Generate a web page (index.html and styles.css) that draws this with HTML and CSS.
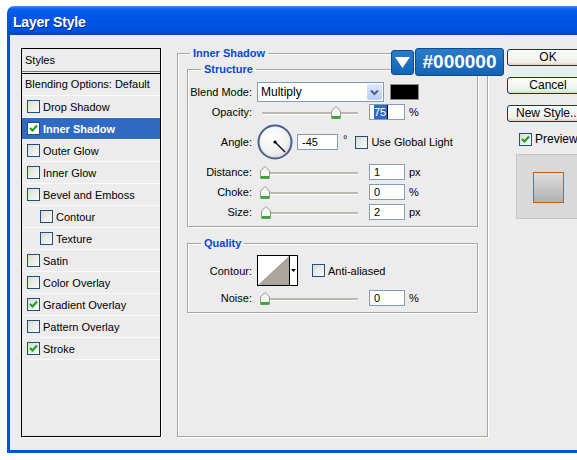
FILE: index.html
```html
<!DOCTYPE html>
<html lang="en">
<head>
  <meta charset="UTF-8">
  <title>Layer Style</title>
  <link rel="stylesheet" href="styles.css">
</head>
<body>
  <div class="window">
    <!-- TITLE BAR -->
    <div class="titlebar">Layer Style</div>

    <div class="client">
      <!-- STYLES LIST -->
      <div class="styles-list">
        <div class="list-head">Styles</div>
        <div class="list-blend">Blending Options: Default</div>
        <div class="list-item"><span class="check"></span>Drop Shadow</div>
        <div class="list-item selected"><span class="check"><svg width="11" height="11" viewBox="0 0 11 11"><path d="M2 5 L4.5 7.5 L9 2.5" fill="none" stroke="#21a121" stroke-width="2.2"/></svg></span>Inner Shadow</div>
        <div class="list-item"><span class="check"></span>Outer Glow</div>
        <div class="list-item"><span class="check"></span>Inner Glow</div>
        <div class="list-item"><span class="check"></span>Bevel and Emboss</div>
        <div class="list-item sub"><span class="check"></span>Contour</div>
        <div class="list-item sub"><span class="check"></span>Texture</div>
        <div class="list-item"><span class="check"></span>Satin</div>
        <div class="list-item"><span class="check"></span>Color Overlay</div>
        <div class="list-item"><span class="check"><svg width="11" height="11" viewBox="0 0 11 11"><path d="M2 5 L4.5 7.5 L9 2.5" fill="none" stroke="#21a121" stroke-width="2.2"/></svg></span>Gradient Overlay</div>
        <div class="list-item"><span class="check"></span>Pattern Overlay</div>
        <div class="list-item"><span class="check"><svg width="11" height="11" viewBox="0 0 11 11"><path d="M2 5 L4.5 7.5 L9 2.5" fill="none" stroke="#21a121" stroke-width="2.2"/></svg></span>Stroke</div>
      </div>

      <!-- INNER SHADOW SETTINGS -->
      <fieldset class="group outer">
        <legend>Inner Shadow</legend>

        <fieldset class="group structure">
          <legend>Structure</legend>
          <div class="row blend-row">
            <span class="lbl">Blend Mode:</span>
            <div class="select">
              <span class="select-value">Multiply</span>
              <span class="select-btn"><svg width="9" height="7" viewBox="0 0 9 7"><path d="M1 1.5 L4.5 5 L8 1.5" fill="none" stroke="#4d6185" stroke-width="2"/></svg></span>
            </div>
            <span class="color-swatch"></span>
          </div>
          <div class="row opacity-row">
            <span class="lbl">Opacity:</span>
            <div class="slider"><span class="thumb" style="left: 74px"><svg width="10" height="13" viewBox="0 0 10 13"><path d="M0.5 5 L5 0.5 L9.5 5 V12.5 H0.5 Z" fill="#f6f6f2" stroke="#8e9a8e"/><rect x="1" y="10" width="8" height="2.5" fill="#33a833"/></svg></span></div>
            <span class="field"><span class="selected-text">75</span></span>
            <span class="unit">%</span>
          </div>
          <div class="row angle-row">
            <span class="lbl">Angle:</span>
            <svg class="dial" width="36" height="36" viewBox="0 0 36 36">
              <defs>
                <radialGradient id="dialFill" cx="0.4" cy="0.35" r="0.7">
                  <stop offset="0" stop-color="#ffffff"/>
                  <stop offset="0.7" stop-color="#f0f0ee"/>
                  <stop offset="1" stop-color="#d2d2d0"/>
                </radialGradient>
              </defs>
              <circle cx="18" cy="18" r="16.5" fill="url(#dialFill)" stroke="#4b5f8e" stroke-width="2"/>
              <line x1="18" y1="18" x2="28" y2="28" stroke="#000" stroke-width="1.2"/>
              <circle cx="18" cy="18" r="1.6" fill="#000"/>
            </svg>
            <span class="field angle-field">-45</span>
            <span class="unit degree">°</span>
            <span class="check global-check"></span>
            <span class="check-label">Use Global Light</span>
          </div>
          <div class="row">
            <span class="lbl">Distance:</span>
            <div class="slider"><span class="thumb" style="left: 3px"><svg width="10" height="13" viewBox="0 0 10 13"><path d="M0.5 5 L5 0.5 L9.5 5 V12.5 H0.5 Z" fill="#f6f6f2" stroke="#8e9a8e"/><rect x="1" y="10" width="8" height="2.5" fill="#33a833"/></svg></span></div>
            <span class="field">1</span>
            <span class="unit">px</span>
          </div>
          <div class="row">
            <span class="lbl">Choke:</span>
            <div class="slider"><span class="thumb" style="left: 3px"><svg width="10" height="13" viewBox="0 0 10 13"><path d="M0.5 5 L5 0.5 L9.5 5 V12.5 H0.5 Z" fill="#f6f6f2" stroke="#8e9a8e"/><rect x="1" y="10" width="8" height="2.5" fill="#33a833"/></svg></span></div>
            <span class="field">0</span>
            <span class="unit">%</span>
          </div>
          <div class="row">
            <span class="lbl">Size:</span>
            <div class="slider"><span class="thumb" style="left: 4px"><svg width="10" height="13" viewBox="0 0 10 13"><path d="M0.5 5 L5 0.5 L9.5 5 V12.5 H0.5 Z" fill="#f6f6f2" stroke="#8e9a8e"/><rect x="1" y="10" width="8" height="2.5" fill="#33a833"/></svg></span></div>
            <span class="field">2</span>
            <span class="unit">px</span>
          </div>
        </fieldset>

        <fieldset class="group quality">
          <legend>Quality</legend>
          <div class="row contour-row">
            <span class="lbl">Contour:</span>
            <div class="contour-picker">
              <svg class="contour-curve" width="31" height="29" viewBox="0 0 31 29"><rect width="31" height="29" fill="#fff"/><path d="M0 29 L31 0 V29 Z" fill="#aaa69b"/></svg>
              <span class="contour-btn"><svg width="5" height="3" viewBox="0 0 5 3"><path d="M0 0 H5 L2.5 3 Z" fill="#000"/></svg></span>
            </div>
            <span class="check aa-check"></span>
            <span class="check-label">Anti-aliased</span>
          </div>
          <div class="row">
            <span class="lbl">Noise:</span>
            <div class="slider"><span class="thumb" style="left: 3px"><svg width="10" height="13" viewBox="0 0 10 13"><path d="M0.5 5 L5 0.5 L9.5 5 V12.5 H0.5 Z" fill="#f6f6f2" stroke="#8e9a8e"/><rect x="1" y="10" width="8" height="2.5" fill="#33a833"/></svg></span></div>
            <span class="field">0</span>
            <span class="unit">%</span>
          </div>
        </fieldset>
      </fieldset>

      <!-- BUTTONS + PREVIEW -->
      <div class="actions">
        <button class="btn">OK</button>
        <button class="btn">Cancel</button>
        <button class="btn">New Style...</button>
        <div class="preview-toggle">
          <span class="check"><svg width="11" height="11" viewBox="0 0 11 11"><path d="M2 5 L4.5 7.5 L9 2.5" fill="none" stroke="#21a121" stroke-width="2.2"/></svg></span>
          <span class="preview-label">Preview</span>
        </div>
        <div class="preview-box">
          <span class="preview-swatch"></span>
        </div>
      </div>
    </div>

    <!-- COLOUR CALLOUT -->
    <div class="swatch-badge">
      <span class="badge-drop"><svg width="15" height="11" viewBox="0 0 15 11"><path d="M0 0 H15 L7.5 11 Z" fill="#fff"/></svg></span>
      <span class="badge-value">#000000</span>
    </div>
  </div>
</body>
</html>
```

FILE: styles.css
```css
body {
  margin: 0;
  background: #fff;
  overflow: hidden;
  font-family: "Liberation Sans", Arial, sans-serif;
  font-size: 11px;
  color: #000;
}

/* WINDOW FRAME */
.window {
  position: relative;
  width: 640px;
  margin: 6px 0 0 7px;
}

.titlebar {
  height: 29px;
  box-sizing: border-box;
  padding: 8px 0 0 6px;
  border-radius: 7px 7px 0 0;
  background: linear-gradient(to bottom, #3d8ef8 0, #0a60e8 3px, #0056e6 40%, #0052df 85%, #0044c4 100%);
  color: #fff;
  font-size: 14px;
  font-weight: bold;
  letter-spacing: -0.2px;
  text-shadow: 1px 1px 0 #0a2a8a;
}

.client {
  display: flex;
  align-items: flex-start;
  height: 418px;
  box-sizing: border-box;
  padding: 13px 0 0 11px;
  background: #ececec;
  border-left: 3px solid #0a4fd8;
  border-bottom: 3px solid #0a4fd8;
}

/* STYLES LIST */
.styles-list {
  width: 140px;
  height: 389px;
  box-sizing: border-box;
  border: 1px solid #000;
  box-shadow: 1px 1px 0 #fff;
}

.list-head {
  height: 22px;
  line-height: 22px;
  padding-left: 3px;
  border-bottom: 1px solid #7a7a7a;
  margin-bottom: 1px;
}

.list-blend {
  height: 21px;
  line-height: 21px;
  padding-left: 3px;
  border-top: 1px solid #000;
  border-bottom: 1px solid #fafafa;
}

.list-item {
  display: flex;
  align-items: center;
  height: 21px;
  padding-left: 5px;
  border-bottom: 1px solid #fafafa;
}

.list-item.sub {
  padding-left: 18px;
}

.list-item.selected {
  background: #316ac5;
  color: #fff;
  font-weight: bold;
}

.check {
  display: inline-flex;
  align-items: center;
  justify-content: center;
  width: 13px;
  height: 13px;
  box-sizing: border-box;
  margin-right: 3px;
  border: 1px solid #1c5180;
  background: linear-gradient(135deg, #dcdcd4, #fbfbf9);
}

.list-item.selected .check {
  background: #fff;
}

/* GROUP BOXES */
.group {
  margin: 0;
  padding: 0 9px;
  box-sizing: border-box;
  border: 1px solid #a5a59c;
  box-shadow: inset 1px 1px 0 #fff, 1px 1px 0 #fff;
}

.group legend {
  padding: 0 3px;
  line-height: 13px;
  color: #0a46d2;
  font-weight: bold;
}

.outer {
  width: 311px;
  height: 390px;
  margin: -1px 0 0 16px;
}

.outer > legend {
  margin-left: 3px;
}

.structure,
.quality {
  padding: 0;
}

.structure legend,
.quality legend {
  margin-left: 13px;
}

.structure {
  margin-top: 3px;
  padding-top: 6px;
  padding-bottom: 6px;
}

.quality {
  margin-top: 10px;
  padding-top: 5px;
  padding-bottom: 6px;
}

/* FORM ROWS */
.row {
  display: flex;
  align-items: center;
  height: 16px;
  margin-top: 4px;
}

.blend-row {
  height: 20px;
  margin-top: 0;
}

.opacity-row {
  margin-top: 2px;
}

.angle-row {
  height: 36px;
}

.contour-row {
  height: 31px;
  margin-top: 0;
}

.lbl {
  width: 64px;
  margin-right: 5px;
  text-align: right;
}

.select {
  display: flex;
  width: 127px;
  height: 20px;
  box-sizing: border-box;
  border: 1px solid #7f9db9;
  background: #fff;
}

.select-value {
  flex: 1;
  padding-left: 3px;
  line-height: 18px;
  font-size: 12px;
}

.select-btn {
  display: flex;
  align-items: center;
  justify-content: center;
  width: 15px;
  margin: 1px;
  border-radius: 2px;
  background: linear-gradient(to bottom, #dde8fd, #b9cdf9);
}

.color-swatch {
  width: 29px;
  height: 16px;
  box-sizing: border-box;
  margin-left: 6px;
  border: 1px solid #8d8d8d;
  background: #000;
}

.slider {
  position: relative;
  width: 107px;
  height: 16px;
}

.slider::before {
  content: "";
  position: absolute;
  left: 5px;
  right: 6px;
  top: 8px;
  height: 2px;
  border-radius: 1px;
  background: #b8b8b0;
  border-bottom: 1px solid #fff;
}

.thumb {
  position: absolute;
  top: 2px;
  line-height: 0;
}

.field {
  width: 36px;
  height: 16px;
  box-sizing: border-box;
  margin-left: 5px;
  padding-left: 4px;
  border: 1px solid #7f9db9;
  background: #fff;
  line-height: 14px;
}

.selected-text {
  display: inline-block;
  background: #316ac5;
  color: #fff;
  border-right: 1px solid #000;
  padding-right: 1px;
}

.unit {
  margin-left: 4px;
}

.angle-field {
  width: 41px;
  margin-left: 4px;
}

.degree {
  margin-left: 5px;
  align-self: flex-start;
  margin-top: 9px;
}

.global-check {
  margin-left: 8px;
}

.contour-picker {
  display: flex;
  width: 41px;
  height: 31px;
  box-sizing: border-box;
  border: 1px solid #000;
  background: #fff;
}

.contour-btn {
  display: flex;
  align-items: center;
  justify-content: center;
  flex: 1;
  border-left: 1px solid #000;
}

.aa-check {
  margin-left: 14px;
}

/* ACTIONS */
.actions {
  display: flex;
  flex-direction: column;
  align-items: flex-start;
  gap: 11px;
  margin: 1px 0 0 19px;
}

.btn {
  width: 82px;
  height: 17px;
  padding: 0;
  border: 1px solid #003c74;
  border-radius: 3px;
  background: linear-gradient(to bottom, #ffffff, #f0f0ea 80%, #d8d4cb);
  font-family: inherit;
  font-size: 12px;
  line-height: 15px;
  color: #000;
}

.preview-toggle {
  display: flex;
  align-items: center;
  margin: -1px 0 0 12px;
}

.preview-label {
  font-size: 12px;
}

.preview-box {
  display: flex;
  width: 70px;
  height: 65px;
  box-sizing: border-box;
  margin: -3px 0 0 9px;
  padding: 17px 0 0 16px;
  border: 1px solid #c4c4c0;
  background: #d9d9d9;
}

.preview-swatch {
  width: 31px;
  height: 31px;
  box-sizing: border-box;
  border: 1px solid #b4621e;
  background: linear-gradient(to bottom, #dedede, #b0b0b0);
}

/* COLOUR CALLOUT */
.swatch-badge {
  position: absolute;
  left: 384px;
  top: 42px;
  display: flex;
  align-items: center;
  gap: 1px;
}

.badge-drop {
  display: flex;
  align-items: center;
  justify-content: center;
  width: 23px;
  height: 25px;
  box-sizing: border-box;
  border: 1px solid #0b4c8a;
  border-radius: 3px;
  background: linear-gradient(to bottom, #2a7ccb, #1464b4);
}

.badge-value {
  width: 89px;
  height: 28px;
  box-sizing: border-box;
  border: 1px solid #0b4c8a;
  border-radius: 3px;
  background: linear-gradient(to bottom, #2a7ccb, #1464b4);
  color: #fff;
  font-size: 19px;
  font-weight: bold;
  line-height: 26px;
  text-align: center;
}
```
